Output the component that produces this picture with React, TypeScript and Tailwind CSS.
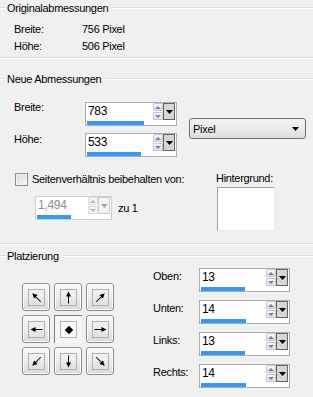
import type { ReactNode } from 'react'

type SpinBoxProps = {
  value: string
  bar: number
  className: string
  disabled?: boolean
}

function SpinArrows({ disabled }: { disabled?: boolean }) {
  const fill = disabled ? '#b9b9b9' : '#6a7fc8'
  const btn = disabled
    ? 'flex h-[8px] w-[10px] items-center justify-center rounded-[1px] border border-[#dadada] bg-[#f4f4f4]'
    : 'flex h-[8px] w-[10px] items-center justify-center rounded-[1px] border border-[#c6c6c6] bg-gradient-to-b from-[#f7f7f7] to-[#e2e2e2]'
  return (
    <div className="flex w-[10px] flex-col justify-center gap-[1px]">
      <div className={btn}>
        <svg width="6" height="3" viewBox="0 0 6 3">
          <path d="M3 0L6 3H0Z" fill={fill} />
        </svg>
      </div>
      <div className={btn}>
        <svg width="6" height="3" viewBox="0 0 6 3">
          <path d="M0 0H6L3 3Z" fill={fill} />
        </svg>
      </div>
    </div>
  )
}

function DropButton({ disabled }: { disabled?: boolean }) {
  return (
    <div
      className={
        disabled
          ? 'flex w-[12px] items-center justify-center border border-[#cdcdcd] bg-[#f2f2f2]'
          : 'flex w-[12px] items-center justify-center border border-[#646464] bg-[#d6d6d6]'
      }
    >
      <svg width="7" height="4" viewBox="0 0 7 4">
        <path d="M0 0H7L3.5 4Z" fill={disabled ? '#a8a8a8' : '#000'} />
      </svg>
    </div>
  )
}

function SpinBox({ value, bar, className, disabled }: SpinBoxProps) {
  return (
    <div
      className={`flex h-[24px] shrink-0 flex-col border bg-white ${
        disabled ? 'border-[#cfcfcf]' : 'border-[#abadb3]'
      } ${className}`}
    >
      <div className="flex h-[17px]">
        <div
          className={`flex-1 pl-[2px] text-[12px] leading-[17px] ${
            disabled ? 'text-[#8e8e8e]' : 'text-black'
          }`}
        >
          {value}
        </div>
        <SpinArrows disabled={disabled} />
        <DropButton disabled={disabled} />
        <div className="w-[1px]" />
      </div>
      <div className="mt-[1px] ml-[1px] h-[4px] bg-[#3399ff]" style={{ width: bar }} />
    </div>
  )
}

function Group({
  title,
  className,
  children,
}: {
  title: string
  className?: string
  children: ReactNode
}) {
  return (
    <div
      className={`border-y border-[#d5dfe5] shadow-[inset_0_1px_0_#fff,0_1px_0_#fff] ${className ?? ''}`}
    >
      <div className="-mt-[7px] flex h-[14px] items-center">
        <span className="ml-[6px] bg-[#f0f0f0] pl-[1px] pr-[4px] leading-[14px]">{title}</span>
      </div>
      {children}
    </div>
  )
}

function Arrow({ deg }: { deg: number }) {
  return (
    <svg width="15" height="15" viewBox="0 0 15 15">
      <g transform={`rotate(${deg} 7.5 7.5)`}>
        <line x1="7.5" y1="13.5" x2="7.5" y2="4" stroke="#000" strokeWidth="1" />
        <path d="M7.5 1.5L10 6.5H5Z" fill="#000" />
      </g>
    </svg>
  )
}

function PlaceButton({ deg, selected }: { deg?: number; selected?: boolean }) {
  if (selected) {
    return (
      <div className="flex h-[28px] w-[28px] items-center justify-center border-l border-t border-[#7d7d7d] bg-[#f6f6f6]">
        <div className="flex h-[17px] w-[17px] items-center justify-center border border-[#b4b4b4] bg-[#fbfbfb]">
          <div className="h-[6px] w-[6px] rotate-45 bg-black" />
        </div>
      </div>
    )
  }
  return (
    <div className="flex h-[28px] w-[28px] items-center justify-center rounded-[3px] border border-[#8e8e8e] bg-gradient-to-b from-[#f8f8f8] via-[#ececec] to-[#d8d8d8] shadow-[inset_0_0_0_1px_#fbfbfb]">
      <div className="flex h-[17px] w-[17px] items-center justify-center border border-[#b0b0b0]">
        <Arrow deg={deg ?? 0} />
      </div>
    </div>
  )
}

const offsets = [
  { label: 'Oben:', value: '13', bar: 44 },
  { label: 'Unten:', value: '14', bar: 45 },
  { label: 'Links:', value: '13', bar: 44 },
  { label: 'Rechts:', value: '14', bar: 45 },
]

export default function App() {
  return (
    <div className="h-[397px] w-[313px] overflow-hidden bg-[#f0f0f0] pt-[7px] font-['Liberation_Sans',Arial,sans-serif] text-[11px] tracking-[-0.3px] text-black">
      <Group title="Originalabmessungen" className="pb-[2px]">
        <div className="flex h-[17px] items-center pt-0 mt-[6px]">
          <span className="ml-[14px] w-[68px]">Breite:</span>
          <span>756 Pixel</span>
        </div>
        <div className="flex h-[17px] items-center">
          <span className="ml-[14px] w-[68px]">Höhe:</span>
          <span>506 Pixel</span>
        </div>
      </Group>

      <Group title="Neue Abmessungen" className="mt-[20px] pb-[12px]">
        <div className="mt-[16px] flex items-start">
          <div className="flex flex-col">
            <div className="flex h-[24px] items-start">
              <span className="-mt-[2px] ml-[14px] w-[71px] leading-[14px]">Breite:</span>
              <SpinBox value="783" bar={57} className="w-[92px]" />
            </div>
            <div className="mt-[7px] flex h-[24px] items-start">
              <span className="-mt-[1px] ml-[14px] w-[71px] leading-[14px]">Höhe:</span>
              <SpinBox value="533" bar={54} className="w-[92px]" />
            </div>
          </div>
          <div className="ml-[12px] mt-[16px] flex h-[21px] w-[117px] items-center rounded-[3px] border border-[#707070] bg-gradient-to-b from-[#f3f3f3] via-[#ebebeb] to-[#dcdcdc] pl-[3px] pr-[6px]">
            <span className="flex-1 leading-[14px]">Pixel</span>
            <svg width="7" height="4" viewBox="0 0 7 4">
              <path d="M0 0H7L3.5 4Z" fill="#000" />
            </svg>
          </div>
        </div>

        <div className="mt-[16px] flex items-start">
          <div className="flex w-[216px] shrink-0 flex-col">
            <div className="flex items-start">
              <div className="ml-[15px] h-[13px] w-[13px] border border-[#8f8f8f] bg-gradient-to-br from-[#d6d6d6] to-[#f9f9f9] shadow-[inset_0_0_0_1px_#f4f4f4]" />
              <span className="-mt-[1px] ml-[4px] leading-[14px]">Seitenverhältnis beibehalten von:</span>
            </div>
            <div className="ml-[35px] mt-[10px] flex items-center">
              <SpinBox value="1,494" bar={34} className="h-[23px] w-[77px]" disabled />
              <span className="ml-[6px]">zu 1</span>
            </div>
          </div>
          <div className="flex flex-col">
            <span className="-mt-[2px] leading-[14px]">Hintergrund:</span>
            <div className="ml-[1px] mt-[2px] h-[44px] w-[58px] border border-b-[#e9e9e9] border-l-[#a0a0a0] border-r-[#e9e9e9] border-t-[#a0a0a0] bg-white" />
          </div>
        </div>
      </Group>

      <Group title="Platzierung" className="mt-[11px] h-[200px]">
        <div className="flex items-start">
          <div className="ml-[22px] mt-[20px] grid grid-cols-3 gap-[4px]">
            <PlaceButton deg={-45} />
            <PlaceButton deg={0} />
            <PlaceButton deg={45} />
            <PlaceButton deg={-90} />
            <PlaceButton selected />
            <PlaceButton deg={90} />
            <PlaceButton deg={-135} />
            <PlaceButton deg={180} />
            <PlaceButton deg={135} />
          </div>
          <div className="ml-[39px] mt-[5px] flex flex-col gap-[8px]">
            {offsets.map((o) => (
              <div key={o.label} className="flex h-[24px] items-start">
                <span className="w-[46px] pt-[1px] leading-[14px]">{o.label}</span>
                <SpinBox value={o.value} bar={o.bar} className="w-[91px]" />
              </div>
            ))}
          </div>
        </div>
      </Group>
    </div>
  )
}
